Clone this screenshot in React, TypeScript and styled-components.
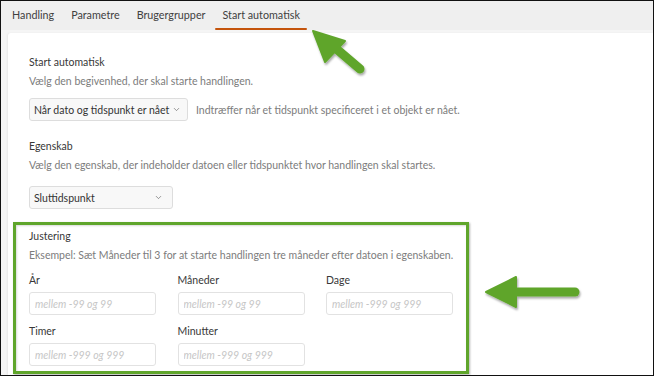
import styled, { createGlobalStyle } from 'styled-components';
import { ChevronDown } from 'lucide-react';

const GlobalStyle = createGlobalStyle`
  html, body {
    margin: 0;
    padding: 0;
    background: #fff;
  }
  * {
    box-sizing: border-box;
  }
`;

const tabs = ['Handling', 'Parametre', 'Brugergrupper', 'Start automatisk'];

const adjustFields = [
  { label: 'År', placeholder: 'mellem -99 og 99' },
  { label: 'Måneder', placeholder: 'mellem -99 og 99' },
  { label: 'Dage', placeholder: 'mellem -999 og 999' },
  { label: 'Timer', placeholder: 'mellem -999 og 999' },
  { label: 'Minutter', placeholder: 'mellem -999 og 999' },
];

const App = () => {
  return (
    <>
      <GlobalStyle />
      <Frame>
        <TabBar>
          {tabs.map((tab, i) => (
            <Tab key={tab} $active={i === tabs.length - 1}>
              {tab}
            </Tab>
          ))}
        </TabBar>
        <Body>
          <Panel>
            <Title>Start automatisk</Title>
            <Hint>Vælg den begivenhed, der skal starte handlingen.</Hint>
            <SelectRow $top={9}>
              <Select $width={159}>
                Når dato og tidspunkt er nået
                <ChevronDown size={9} strokeWidth={1.6} />
              </Select>
              <Hint>Indtræffer når et tidspunkt specificeret i et objekt er nået.</Hint>
            </SelectRow>

            <Title $top={17}>Egenskab</Title>
            <Hint>Vælg den egenskab, der indeholder datoen eller tidspunktet hvor handlingen skal startes.</Hint>
            <SelectRow $top={13}>
              <Select $width={144} $spread>
                Sluttidspunkt
                <ChevronDown size={9} strokeWidth={1.6} />
              </Select>
            </SelectRow>

            <Highlight>
              <Title>Justering</Title>
              <Hint>Eksempel: Sæt Måneder til 3 for at starte handlingen tre måneder efter datoen i egenskaben.</Hint>
              <FieldGrid>
                {adjustFields.map((f) => (
                  <Field key={f.label}>
                    <FieldLabel>{f.label}</FieldLabel>
                    <Input placeholder={f.placeholder} />
                  </Field>
                ))}
              </FieldGrid>
            </Highlight>
          </Panel>
        </Body>

        <Arrows width="654" height="376" viewBox="0 0 654 376">
          <defs>
            <filter id="shadow" x="-20%" y="-20%" width="140%" height="140%">
              <feDropShadow dx="1" dy="2" stdDeviation="1.2" floodColor="#000" floodOpacity="0.35" />
            </filter>
          </defs>
          <g filter="url(#shadow)" fill="#5fa52b" stroke="#5fa52b" strokeLinecap="round" strokeLinejoin="round">
            <line x1="333" y1="46" x2="360" y2="69" strokeWidth="9" />
            <polygon points="313,31 345,41 325,62" strokeWidth="2" />
            <line x1="510" y1="292" x2="575" y2="292" strokeWidth="9" />
            <polygon points="486,292 516,277 516,307" strokeWidth="2" />
          </g>
        </Arrows>
      </Frame>
    </>
  );
};

const Frame = styled.div`
  position: relative;
  width: 654px;
  height: 376px;
  border: 1px solid #111;
  background: #f5f5f5;
  overflow: hidden;
  display: flex;
  flex-direction: column;
  font-family: Lato, 'Open Sans', sans-serif;
  color: #3a3a3a;
`;

const TabBar = styled.div`
  display: flex;
  flex-shrink: 0;
  height: 29px;
  padding-left: 4px;
  gap: 3px;
  background: #efefef;
`;

const Tab = styled.div<{ $active?: boolean }>`
  position: relative;
  padding: 0 7px 2px;
  display: flex;
  align-items: center;
  font-size: 10.75px;
  color: #404040;
  &::after {
    content: '';
    position: absolute;
    left: 0;
    right: 0;
    bottom: 0;
    height: 2.5px;
    border-radius: 2px;
    background: ${(p) => (p.$active ? '#c4540c' : 'transparent')};
  }
`;

const Body = styled.div`
  flex: 1;
  min-height: 0;
  padding: 3px 0 0 7px;
`;

const Panel = styled.div`
  height: 100%;
  background: #fff;
  border-radius: 3px 0 0 0;
  box-shadow: -1px 0 2px rgba(0, 0, 0, 0.05);
  padding: 21px 0 0 21px;
`;

const Title = styled.div<{ $top?: number }>`
  font-size: 10.5px;
  line-height: 16px;
  color: #383838;
  margin-top: ${(p) => p.$top ?? 0}px;
`;

const Hint = styled.div`
  font-size: 10.5px;
  line-height: 16px;
  color: #7c7c7c;
  margin-top: 3px;
  white-space: nowrap;
`;

const SelectRow = styled.div<{ $top: number }>`
  display: flex;
  align-items: center;
  gap: 8px;
  margin-top: ${(p) => p.$top}px;
  ${Hint} {
    margin-top: 0;
  }
`;

const Select = styled.div<{ $width: number; $spread?: boolean }>`
  width: ${(p) => p.$width}px;
  height: 23px;
  display: flex;
  align-items: center;
  justify-content: ${(p) => (p.$spread ? 'space-between' : 'flex-start')};
  gap: 3px;
  padding: 0 9px 0 4px;
  font-size: 10.5px;
  color: #333;
  white-space: nowrap;
  background: #f8f8f8;
  border: 1px solid #dddddd;
  border-radius: 3px;
  svg {
    color: #555;
    flex-shrink: 0;
  }
`;

const Highlight = styled.div`
  width: 456px;
  margin: 13px 0 0 -16px;
  padding: 3px 13px 5px;
  border: 3px solid #5fa52b;
  box-shadow: 1px 1px 2px rgba(0, 0, 0, 0.3), inset 1px 1px 2px rgba(0, 0, 0, 0.15);
`;

const FieldGrid = styled.div`
  display: grid;
  grid-template-columns: repeat(3, 127px);
  column-gap: 21.5px;
  row-gap: 8px;
  margin-top: 9px;
`;

const Field = styled.div`
  display: flex;
  flex-direction: column;
  gap: 4px;
`;

const FieldLabel = styled.div`
  font-size: 10.5px;
  line-height: 16px;
  color: #383838;
`;

const Input = styled.input`
  width: 127px;
  height: 23px;
  padding: 0 5px;
  font-family: inherit;
  font-size: 10.5px;
  border: 1px solid #e2e2e2;
  border-radius: 3px;
  outline: none;
  &::placeholder {
    color: #c6c6c6;
    font-style: italic;
  }
`;

const Arrows = styled.svg`
  position: absolute;
  left: -1px;
  top: -1px;
  pointer-events: none;
`;

export default App;
